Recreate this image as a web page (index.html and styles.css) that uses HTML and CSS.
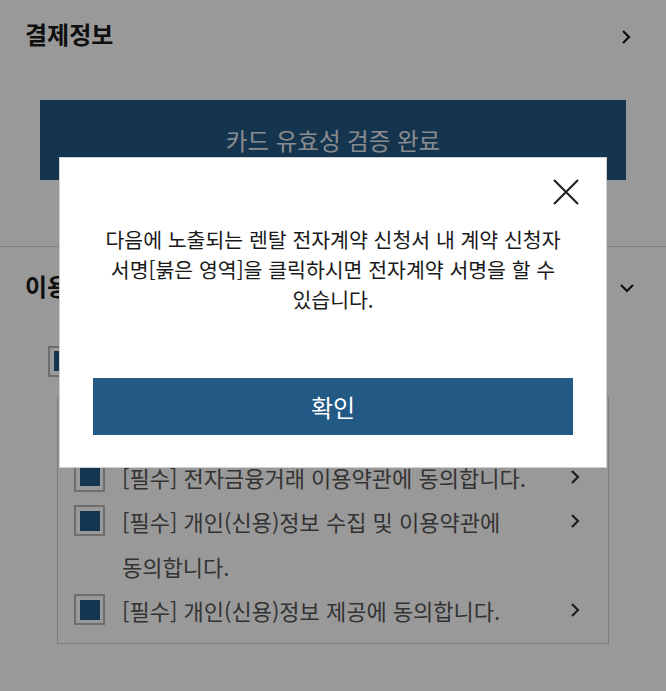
FILE: index.html
```html
<!DOCTYPE html>
<html lang="ko">
<head>
    <meta charset="UTF-8">
    <title>렌탈 신청</title>
    <link rel="stylesheet" href="styles.css">
</head>
<body>
    <!-- 결제정보 -->
    <div class="section pay">
        <div class="section-head">
            <h2>결제정보</h2>
            <svg class="chev" width="14" height="18" viewBox="0 0 14 18"><path d="M4 3 L10 9 L4 15" fill="none" stroke="#1a1a1a" stroke-width="2.2"/></svg>
        </div>
        <button class="card-check">카드 유효성 검증 완료</button>
    </div>

    <!-- 이용약관 -->
    <div class="section terms">
        <div class="section-head">
            <h2>이용약관 동의</h2>
            <svg class="chev" width="18" height="14" viewBox="0 0 18 14"><path d="M3 4 L9 10 L15 4" fill="none" stroke="#1a1a1a" stroke-width="2.2"/></svg>
        </div>
        <div class="all-agree">
            <span class="check"><span></span></span>
            <span class="all-label">약관 전체 동의</span>
        </div>
        <div class="terms-box">
            <div class="term-row">
                <span class="check"><span></span></span>
                <p>[필수] 렌탈 서비스 이용약관에 동의합니다.</p>
                <svg class="row-chev" width="14" height="44" viewBox="0 0 14 44"><path d="M4 16 L10 22 L4 28" fill="none" stroke="#333" stroke-width="2.2"/></svg>
            </div>
            <div class="term-row">
                <span class="check"><span></span></span>
                <p>[필수] 전자금융거래 이용약관에 동의합니다.</p>
                <svg class="row-chev" width="14" height="44" viewBox="0 0 14 44"><path d="M4 16 L10 22 L4 28" fill="none" stroke="#333" stroke-width="2.2"/></svg>
            </div>
            <div class="term-row">
                <span class="check"><span></span></span>
                <p>[필수] 개인(신용)정보 수집 및 이용약관에 동의합니다.</p>
                <svg class="row-chev" width="14" height="44" viewBox="0 0 14 44"><path d="M4 16 L10 22 L4 28" fill="none" stroke="#333" stroke-width="2.2"/></svg>
            </div>
            <div class="term-row">
                <span class="check"><span></span></span>
                <p>[필수] 개인(신용)정보 제공에 동의합니다.</p>
                <svg class="row-chev" width="14" height="44" viewBox="0 0 14 44"><path d="M4 16 L10 22 L4 28" fill="none" stroke="#333" stroke-width="2.2"/></svg>
            </div>
        </div>
    </div>

    <!-- 안내 팝업 -->
    <div class="dim"></div>
    <div class="modal">
        <div class="modal-top">
            <button class="close" aria-label="닫기">
                <svg width="26" height="26" viewBox="0 0 26 26"><path d="M1 1 L25 25 M25 1 L1 25" stroke="#222" stroke-width="2.2"/></svg>
            </button>
        </div>
        <p class="modal-text">다음에 노출되는 렌탈 전자계약 신청서 내 계약 신청자 서명[붉은 영역]을 클릭하시면 전자계약 서명을 할 수 있습니다.</p>
        <button class="ok">확인</button>
    </div>
</body>
</html>
```

FILE: styles.css
```css
body {
    font-family: "Noto Sans CJK KR", sans-serif;
    margin: 0;
    padding: 0;
    background-color: #fff;
    color: #1a1a1a;
}
.section {
    border-bottom: 1px solid #d8d8d8;
}
.section-head {
    display: flex;
    justify-content: space-between;
    align-items: center;
    padding: 0 32px 0 25px;
}
.section-head h2 {
    margin: 0;
    font-size: 24px;
    font-weight: bold;
}
.pay .section-head {
    height: 66px;
}
.pay .chev {
    margin-top: 8px;
    margin-right: 1px;
}
.pay {
    padding-bottom: 66px;
}
.card-check {
    display: block;
    width: calc(100% - 80px);
    height: 80px;
    margin: 34px 40px 0;
    border: none;
    background-color: #235782;
    color: #e2e8ee;
    font-family: inherit;
    font-size: 23.5px;
}
.terms .section-head {
    height: 76px;
}
.terms .chev {
    margin-top: 6px;
    margin-right: -2px;
}
.terms {
    padding-bottom: 48px;
}
.check {
    display: flex;
    justify-content: center;
    align-items: center;
    flex-shrink: 0;
    width: 31px;
    height: 31px;
    box-sizing: border-box;
    border: 2px solid #b8b8b8;
    background-color: #fff;
}
.check span {
    width: 20px;
    height: 20px;
    background-color: #235a85;
}
.all-agree {
    display: flex;
    align-items: center;
    gap: 16px;
    margin: 22px 0 0 48px;
    height: 32px;
    font-size: 22px;
    color: #555;
}
.terms-box {
    margin: 20px 57px 0;
    padding: 12px 26px 10px 16px;
    border: 1px solid #cfcfcf;
}
.term-row {
    display: flex;
    align-items: flex-start;
}
.term-row .check {
    margin-top: 6px;
}
.term-row p {
    flex: 1;
    margin: 0 24px 0 17px;
    font-size: 22px;
    line-height: 44.5px;
    color: #555;
    word-break: keep-all;
}
.row-chev {
    flex-shrink: 0;
}
.dim {
    position: fixed;
    top: 0;
    left: 0;
    right: 0;
    bottom: 0;
    background-color: rgba(0, 0, 0, 0.4);
}
.modal {
    position: fixed;
    top: 157px;
    left: 59px;
    width: 548px;
    box-sizing: border-box;
    padding: 21px 33px 32px;
    background-color: #fff;
    border: 1px solid #d0d0d0;
}
.modal-top {
    display: flex;
    justify-content: flex-end;
    height: 25px;
}
.close {
    width: 26px;
    height: 26px;
    margin-right: -6px;
    padding: 0;
    border: none;
    background: none;
}
.modal-text {
    margin: 20px 0 0;
    padding: 0 6px;
    font-size: 20.5px;
    line-height: 30px;
    text-align: center;
    color: #1a1a1a;
}
.ok {
    display: block;
    width: 100%;
    height: 57px;
    margin-top: 64px;
    border: none;
    background-color: #235a85;
    color: #fff;
    font-family: inherit;
    font-size: 24px;
}
```
